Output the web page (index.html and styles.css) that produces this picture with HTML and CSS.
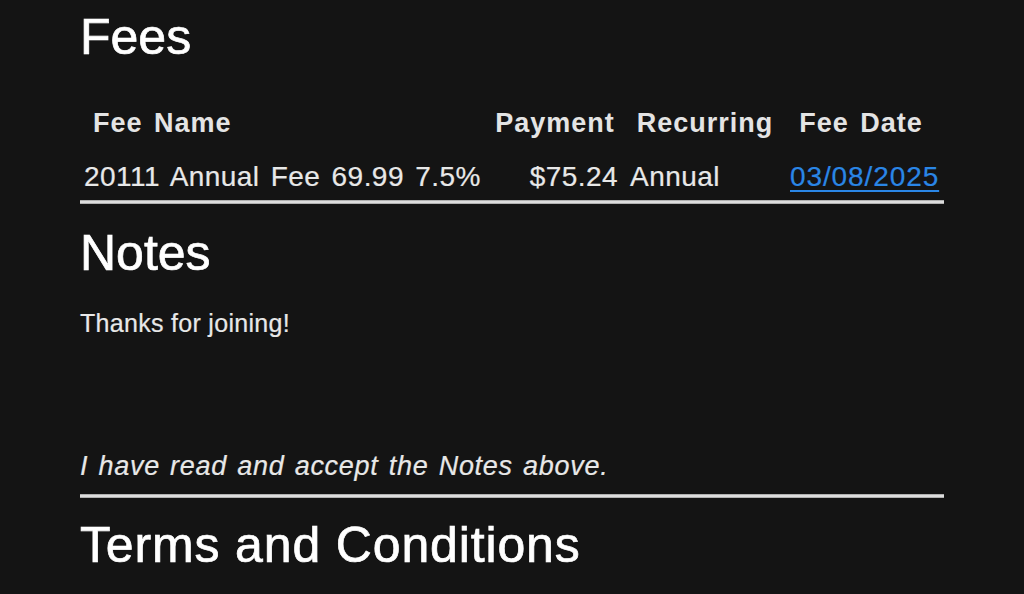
FILE: index.html
```html
<!DOCTYPE html>
<html lang="en">
<head>
<meta charset="utf-8">
<title>Fees</title>
<link rel="stylesheet" href="styles.css">
</head>
<body>
<main class="page">
  <h1 class="section-title fees-title">Fees</h1>
  <div class="fee-table">
    <div class="th th-name">Fee Name</div>
    <div class="th th-center">Payment</div>
    <div class="th th-center">Recurring</div>
    <div class="th th-center th-date">Fee Date</div>
    <div class="td td-name">20111 Annual Fee 69.99 7.5%</div>
    <div class="td td-pay">$75.24</div>
    <div class="td td-rec">Annual</div>
    <div class="td td-date"><a href="#" class="date-link">03/08/2025</a></div>
  </div>
  <div class="rule"></div>
  <h1 class="section-title notes-title">Notes</h1>
  <div class="notes-body">
    <p class="notes-text">Thanks for joining!</p>
  </div>
  <p class="accept">I have read and accept the Notes above.</p>
  <div class="rule"></div>
  <h1 class="section-title terms-title">Terms and Conditions</h1>
</main>
</body>
</html>
```
FILE: styles.css
```css
html, body {
  margin: 0;
  padding: 0;
  background: #141414;
}
body {
  font-family: "Liberation Sans", Arial, Helvetica, sans-serif;
  color: #e8e8e8;
  overflow: hidden;
}
.page {
  width: 864px;
  padding-left: 80px;
  padding-top: 10px;
}
.section-title {
  margin: 0;
  font-size: 50px;
  font-weight: 400;
  line-height: 54px;
  color: #ffffff;
  letter-spacing: 0;
  -webkit-text-stroke: 0.7px #ffffff;
}
.fee-table {
  display: grid;
  grid-template-columns: 404px 142px 158px 160px;
  margin-top: 45px;
}
.th {
  font-size: 27px;
  font-weight: 700;
  line-height: 28px;
  color: #e4e4e4;
  letter-spacing: 1px;
  word-spacing: 3px;
  padding-bottom: 25px;
  white-space: nowrap;
}
.th-name {
  padding-left: 13px;
}
.th-center {
  text-align: center;
}
.th-date {
  padding-right: 6px;
}
.td {
  font-size: 28px;
  line-height: 30px;
  color: #e8e8e8;
  letter-spacing: 0.45px;
  word-spacing: 3px;
  padding-bottom: 8px;
  white-space: nowrap;
  -webkit-text-stroke: 0.2px #e8e8e8;
}
.td-name {
  padding-left: 4px;
}
.td-pay {
  text-align: right;
  padding-right: 8px;
}
.td-rec {
  padding-left: 4px;
}
.td-date {
  padding-left: 6px;
}
.date-link {
  color: #2a86e6;
  letter-spacing: 0.9px;
  text-decoration: underline;
  text-decoration-thickness: 2px;
  text-underline-offset: 4px;
  -webkit-text-stroke: 0.2px #2a86e6;
}
.rule {
  height: 4px;
  background: linear-gradient(#9a9a9a, #e2e2e2 40%, #e2e2e2 60%, #9a9a9a);
}
.notes-title {
  margin-top: 22px;
}
.notes-body {
  height: 172px;
  padding-top: 29px;
  box-sizing: border-box;
}
.notes-text {
  margin: 0;
  font-size: 25px;
  line-height: 28px;
  letter-spacing: 0.3px;
  -webkit-text-stroke: 0.2px #e8e8e8;
}
.accept {
  margin: 0;
  font-size: 27px;
  line-height: 28px;
  font-style: italic;
  letter-spacing: 0.72px;
  word-spacing: 2px;
  padding-bottom: 14px;
  -webkit-text-stroke: 0.2px #e8e8e8;
}
.terms-title {
  margin-top: 20px;
  letter-spacing: 0.85px;
}
```
